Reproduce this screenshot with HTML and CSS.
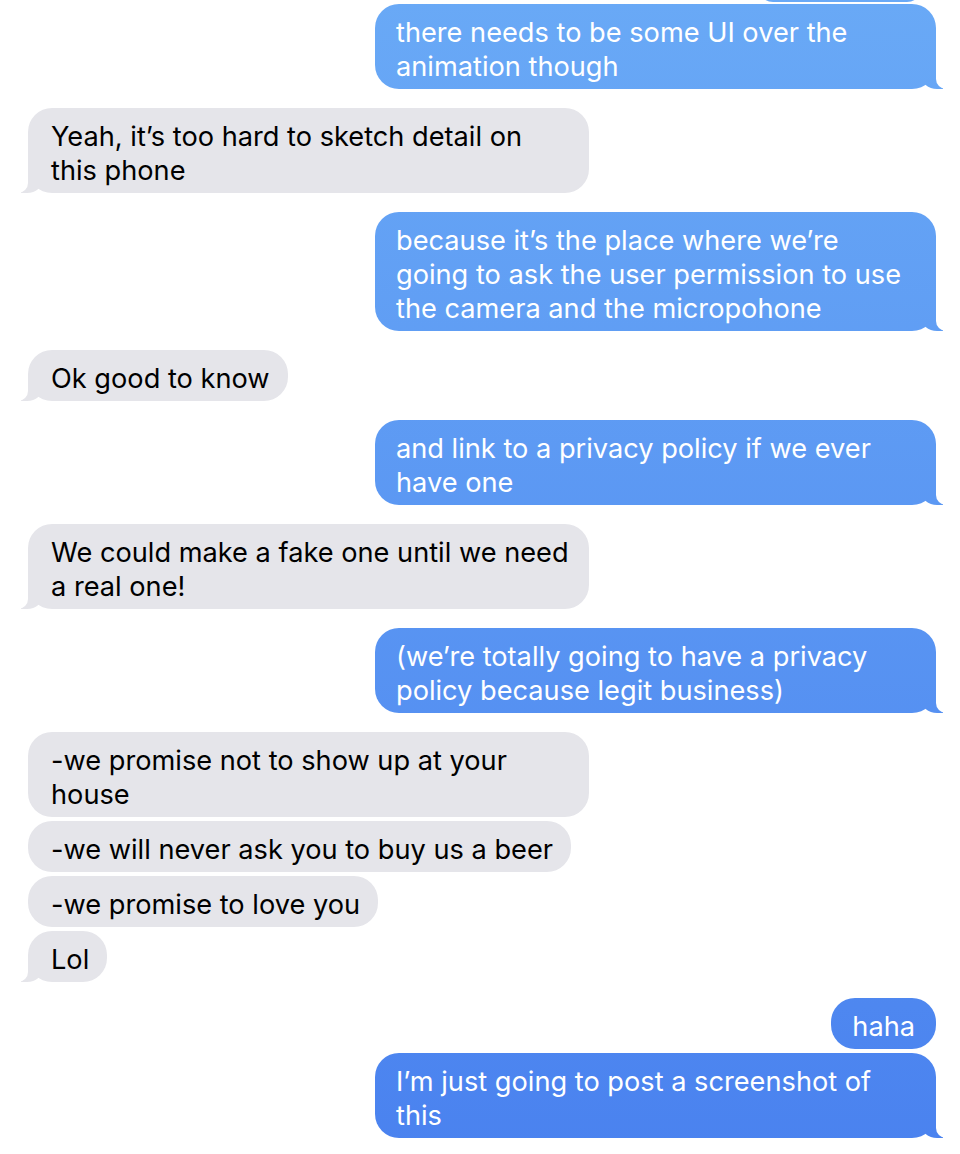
FILE: index.html
```html
<!DOCTYPE html>
<html lang="en">
<head>
<meta charset="utf-8">
<title>Messages</title>
<link rel="stylesheet" href="styles.css">
</head>
<body>
<div class="thread">
  <div class="sliver"></div>
  <div class="msg sent tail first">there needs to be some UI over the animation though</div>
  <div class="msg recv tail">Yeah, it’s too hard to sketch detail on this phone</div>
  <div class="msg sent tail">because it’s the place where we’re going to ask the user permission to use the camera and the micropohone</div>
  <div class="msg recv tail">Ok good to know</div>
  <div class="msg sent tail">and link to a privacy policy if we ever have one</div>
  <div class="msg recv tail">We could make a fake one until we need a real one!</div>
  <div class="msg sent tail">(we’re totally going to have a privacy policy because legit business)</div>
  <div class="msg recv">-we promise not to show up at your house</div>
  <div class="msg recv cont">-we will never ask you to buy us a beer</div>
  <div class="msg recv cont">-we promise to love you</div>
  <div class="msg recv cont tail">Lol</div>
  <div class="msg sent near">haha</div>
  <div class="msg sent cont tail">I’m just going to post a screenshot of this</div>
</div>
</body>
</html>
```

FILE: styles.css
```css
html, body {
  margin: 0;
  padding: 0;
  background: #ffffff;
}

body {
  font-family: "Inter", "Roboto", "Liberation Sans", sans-serif;
  -webkit-font-smoothing: antialiased;
}

.thread {
  display: flex;
  flex-direction: column;
  padding: 0 24px 0 28px;
}

.sliver {
  align-self: flex-end;
  width: 164px;
  height: 30px;
  margin-top: -28px;
  margin-right: 14px;
  border-radius: 20px;
  background: linear-gradient(to bottom, #69a9f6 0px, #4a82ef 1154px) fixed;
}

.msg {
  position: relative;
  z-index: 0;
  box-sizing: border-box;
  max-width: 561px;
  padding: 11.5px 21px 5.5px;
  font-size: 27.2px;
  line-height: 34px;
  border-radius: 24px;
  margin-top: 19px;
  overflow-wrap: break-word;
}

.msg.first {
  margin-top: 2px;
}

.msg.cont {
  margin-top: 4px;
}

.msg.near {
  margin-top: 16px;
}

.sent {
  align-self: flex-end;
  color: #ffffff;
  background: linear-gradient(to bottom, #69a9f6 0px, #4a82ef 1154px) fixed;
}

.recv {
  align-self: flex-start;
  color: #000000;
  background: #e5e5ea;
  padding-left: 23px;
  padding-right: 18px;
}

.tail::before,
.tail::after {
  content: "";
  position: absolute;
  bottom: 0;
  z-index: -1;
  height: 24px;
}

.sent.tail::before {
  right: -7px;
  width: 22px;
  background: linear-gradient(to bottom, #69a9f6 0px, #4a82ef 1154px) fixed;
  border-bottom-left-radius: 16px 14px;
}

.sent.tail::after {
  right: -26px;
  width: 26px;
  background: #ffffff;
  border-bottom-left-radius: 10px;
}

.recv.tail::before {
  left: -7px;
  width: 22px;
  background: #e5e5ea;
  border-bottom-right-radius: 16px 14px;
}

.recv.tail::after {
  left: -26px;
  width: 26px;
  background: #ffffff;
  border-bottom-right-radius: 10px;
}
```
